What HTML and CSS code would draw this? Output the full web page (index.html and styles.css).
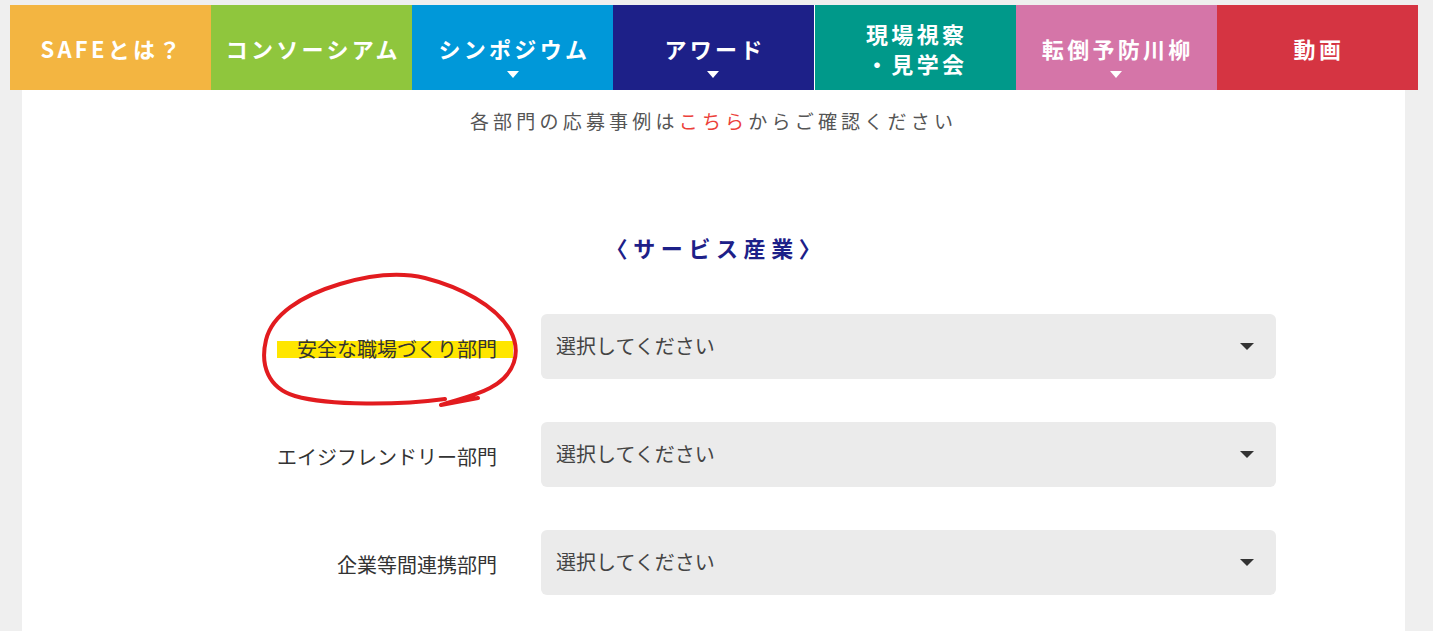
FILE: index.html
```html
<!DOCTYPE html>
<html lang="ja">
<head>
<meta charset="utf-8">
<title>SAFE アワード</title>
<link rel="stylesheet" href="styles.css">
</head>
<body>
<nav class="gnav">
  <a class="gnav-item c-orange" href="#">SAFEとは？</a>
  <a class="gnav-item c-green" href="#">コンソーシアム</a>
  <a class="gnav-item c-blue has-sub" href="#">シンポジウム</a>
  <a class="gnav-item c-navy has-sub" href="#">アワード</a>
  <a class="gnav-item c-teal two-line" href="#"><span>現場視察</span><span>・見学会</span></a>
  <a class="gnav-item c-pink has-sub" href="#">転倒予防川柳</a>
  <a class="gnav-item c-red" href="#">動画</a>
</nav>

<main class="content">
  <p class="lead">各部門の応募事例は<a class="lead-link" href="#">こちら</a>からご確認ください</p>

  <h2 class="sector">〈サービス産業〉</h2>

  <div class="form">
    <div class="form-row">
      <label class="form-label"><span class="marker">安全な職場づくり部門</span></label>
      <div class="select"><span>選択してください</span><i class="caret"></i></div>
    </div>
    <div class="form-row">
      <label class="form-label">エイジフレンドリー部門</label>
      <div class="select"><span>選択してください</span><i class="caret"></i></div>
    </div>
    <div class="form-row">
      <label class="form-label">企業等間連携部門</label>
      <div class="select"><span>選択してください</span><i class="caret"></i></div>
    </div>
  </div>

  <svg class="circle-mark" viewBox="250 265 280 150" width="280" height="150" aria-hidden="true">
    <path d="M 445 399 C 400 405, 330 406, 295 396 C 268 388, 260 365, 266 340 C 272 315, 300 296, 340 284 C 370 275, 400 272, 425 278 C 460 287, 495 305, 510 330 C 522 352, 515 375, 490 388 C 475 396, 455 400, 441 405 L 478 398" fill="none" stroke="#e21b1f" stroke-width="4" stroke-linecap="round" stroke-linejoin="round"/>
  </svg>
</main>
</body>
</html>
```

FILE: styles.css
```css
* {
  box-sizing: border-box;
}

html, body {
  margin: 0;
  padding: 0;
}

body {
  background: #efefef;
  padding-top: 5px;
  font-family: "Noto Sans CJK JP", "Noto Sans", sans-serif;
  color: #333;
}

.gnav {
  display: grid;
  grid-template-columns: repeat(7, 1fr);
  width: 1408px;
  height: 85px;
  margin-left: 10px;
}

.gnav-item {
  position: relative;
  display: flex;
  flex-direction: column;
  align-items: center;
  justify-content: center;
  color: #fff;
  text-decoration: none;
  font-weight: 700;
  font-size: 22px;
  letter-spacing: 3.3px;
  line-height: 30px;
  padding-left: 3px;
}

.gnav-item.two-line {
  padding-top: 0;
}

.has-sub::after {
  content: "";
  position: absolute;
  left: 50%;
  bottom: 12px;
  margin-left: -6px;
  border-left: 6px solid transparent;
  border-right: 6px solid transparent;
  border-top: 7px solid #fff;
}

.c-orange { background: #f3b541; }
.c-green  { background: #8fc63d; }
.c-blue   { background: #0098d9; }
.c-navy   { background: #1d2088; border-right: 1px solid #fff; }
.c-teal   { background: #00998a; }
.c-pink   { background: #d575a8; }
.c-red    { background: #d53442; }

.content {
  position: relative;
  z-index: 0;
  width: 1383px;
  margin-left: 22px;
  min-height: 560px;
  background: #fff;
  padding-top: 16px;
  padding-bottom: 60px;
}

.lead {
  margin: 0;
  text-align: center;
  font-size: 19px;
  line-height: 30px;
  letter-spacing: 4.2px;
  color: #555;
}

.lead-link {
  color: #ec3f3a;
  text-decoration: none;
}

.sector {
  margin: 96px 0 0;
  text-align: center;
  font-size: 22px;
  line-height: 30px;
  letter-spacing: 5.6px;
  padding-left: 5px;
  font-weight: 700;
  color: #1d2088;
}

.form {
  display: flex;
  flex-direction: column;
  gap: 43px;
  width: 1125px;
  margin: 52px auto 0;
}

.form-row {
  display: grid;
  grid-template-columns: 346px 735px;
  column-gap: 44px;
  align-items: center;
}

.form-label {
  text-align: right;
  font-size: 20px;
  line-height: 30px;
  color: #333;
  padding-top: 4px;
}

.marker {
  position: relative;
}

.marker::before {
  content: "";
  position: absolute;
  left: -20px;
  right: -16px;
  top: 7px;
  bottom: 5px;
  background: #ffe600;
  z-index: -1;
}

.select {
  display: flex;
  align-items: center;
  justify-content: space-between;
  height: 65px;
  padding: 0 22px 0 15px;
  background: #ebebeb;
  border-radius: 6px;
  font-size: 20px;
  color: #444;
}

.select span {
  padding-bottom: 3px;
}

.caret {
  display: block;
  width: 0;
  height: 0;
  border-left: 7px solid transparent;
  border-right: 7px solid transparent;
  border-top: 7px solid #333;
}

.circle-mark {
  position: absolute;
  left: 228px;
  top: 175px;
  overflow: visible;
  pointer-events: none;
}
```
